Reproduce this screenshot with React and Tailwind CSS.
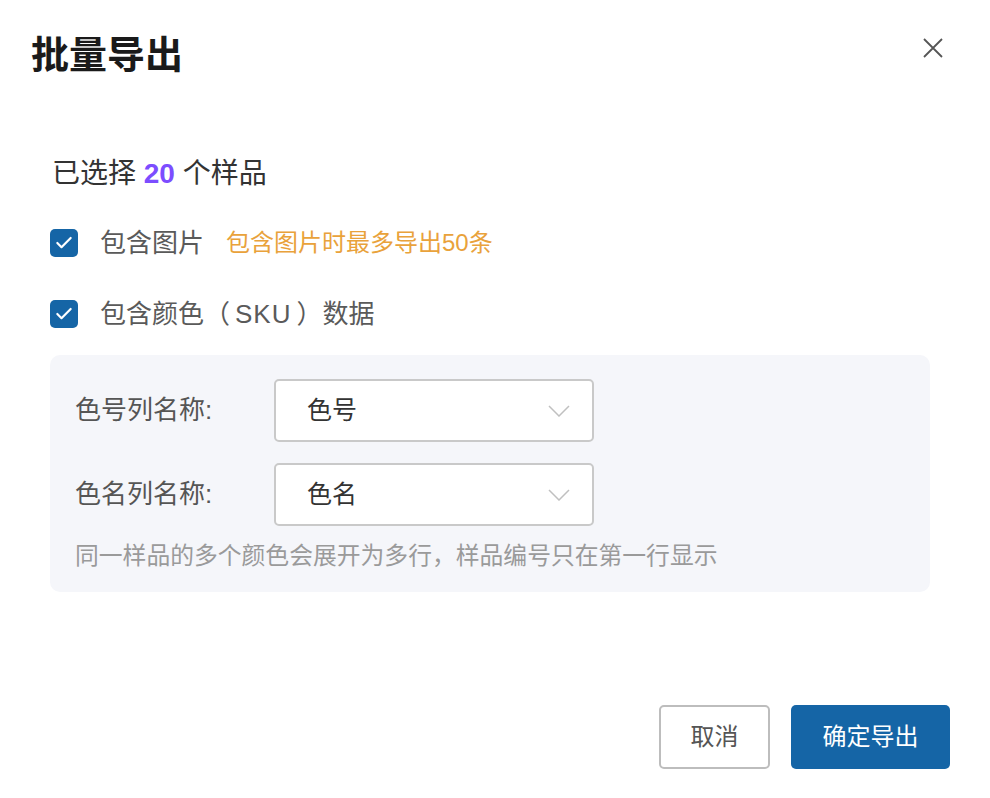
import { Check } from 'lucide-react'

const Checkbox = () => (
  <span className="flex h-[28px] w-[28px] items-center justify-center rounded-[5px] bg-[#1565a6]">
    <Check className="h-[20px] w-[20px] text-white" strokeWidth={2.6} />
  </span>
)

const Chevron = () => (
  <svg width="22" height="12" viewBox="0 0 22 12" fill="none">
    <path d="M1 1l10 10L21 1" stroke="#c0c0c0" strokeWidth="1.5" />
  </svg>
)

const CloseIcon = () => (
  <svg width="20" height="20" viewBox="0 0 20 20" fill="none">
    <path d="M1 1l18 18M19 1L1 19" stroke="#555" strokeWidth="1.8" />
  </svg>
)

const SelectBox = ({ value }) => (
  <div className="flex h-[63px] w-[320px] items-center justify-between rounded-[5px] border-2 border-[#c9c9c9] bg-white pl-[31px] pr-[22px]">
    <span className="text-[25px] text-[#333]">{value}</span>
    <Chevron />
  </div>
)

const App = () => {
  const fields = [
    { label: '色号列名称:', value: '色号' },
    { label: '色名列名称:', value: '色名' },
  ]

  return (
    <div
      className="flex h-[798px] w-[990px] flex-col bg-white"
      style={{ fontFamily: '"Liberation Sans", "Noto Sans CJK SC", sans-serif' }}
    >
      {/* Заголовок */}
      <div className="flex justify-between pl-[31px] pr-[47px] pt-[32px]">
        <h1 className="text-[38px] font-bold leading-[46px] text-[#1a1a1a]">批量导出</h1>
        <button className="mt-[6px] self-start">
          <CloseIcon />
        </button>
      </div>

      {/* Контент */}
      <div className="flex flex-col pl-[50px] pr-[60px]">
        <p className="mt-[76px] pl-[2px] text-[28px] leading-[40px] text-[#333]">
          已选择 <span className="font-bold text-[#7c4dff]">20</span> 个样品
        </p>

        <label className="mt-[35px] flex h-[28px] items-center">
          <Checkbox />
          <span className="ml-[22px] text-[26px] text-[#5a5a5a]">包含图片</span>
          <span className="ml-[22px] text-[24px] text-[#e9a23b]">包含图片时最多导出50条</span>
        </label>

        <label className="mt-[43px] flex h-[28px] items-center">
          <Checkbox />
          <span className="ml-[22px] text-[26px] text-[#5a5a5a]">
            包含颜色（<span className="mx-[5px] tracking-[1px]">SKU</span>）数据
          </span>
        </label>

        <div className="mt-[27px] flex w-[880px] flex-col gap-[21px] rounded-[10px] bg-[#f5f6fa] pb-[18px] pl-[25px] pt-[24px]">
          {fields.map((f) => (
            <div key={f.label} className="flex items-center">
              <span className="w-[199px] text-[26px] text-[#555]">{f.label}</span>
              <SelectBox value={f.value} />
            </div>
          ))}
          <p className="-mt-[9px] text-[23.8px] leading-[36px] text-[#9a9a9a]">
            同一样品的多个颜色会展开为多行，样品编号只在第一行显示
          </p>
        </div>
      </div>

      {/* Кнопки */}
      <div className="mt-auto flex justify-end gap-[21px] pb-[29px] pr-[40px]">
        <button className="h-[64px] w-[111px] rounded-[5px] border-2 border-[#bdbdbd] bg-white text-[24px] text-[#555]">
          取消
        </button>
        <button className="h-[64px] w-[159px] rounded-[5px] bg-[#1565a6] text-[24px] text-white">
          确定导出
        </button>
      </div>
    </div>
  )
}

export default App
